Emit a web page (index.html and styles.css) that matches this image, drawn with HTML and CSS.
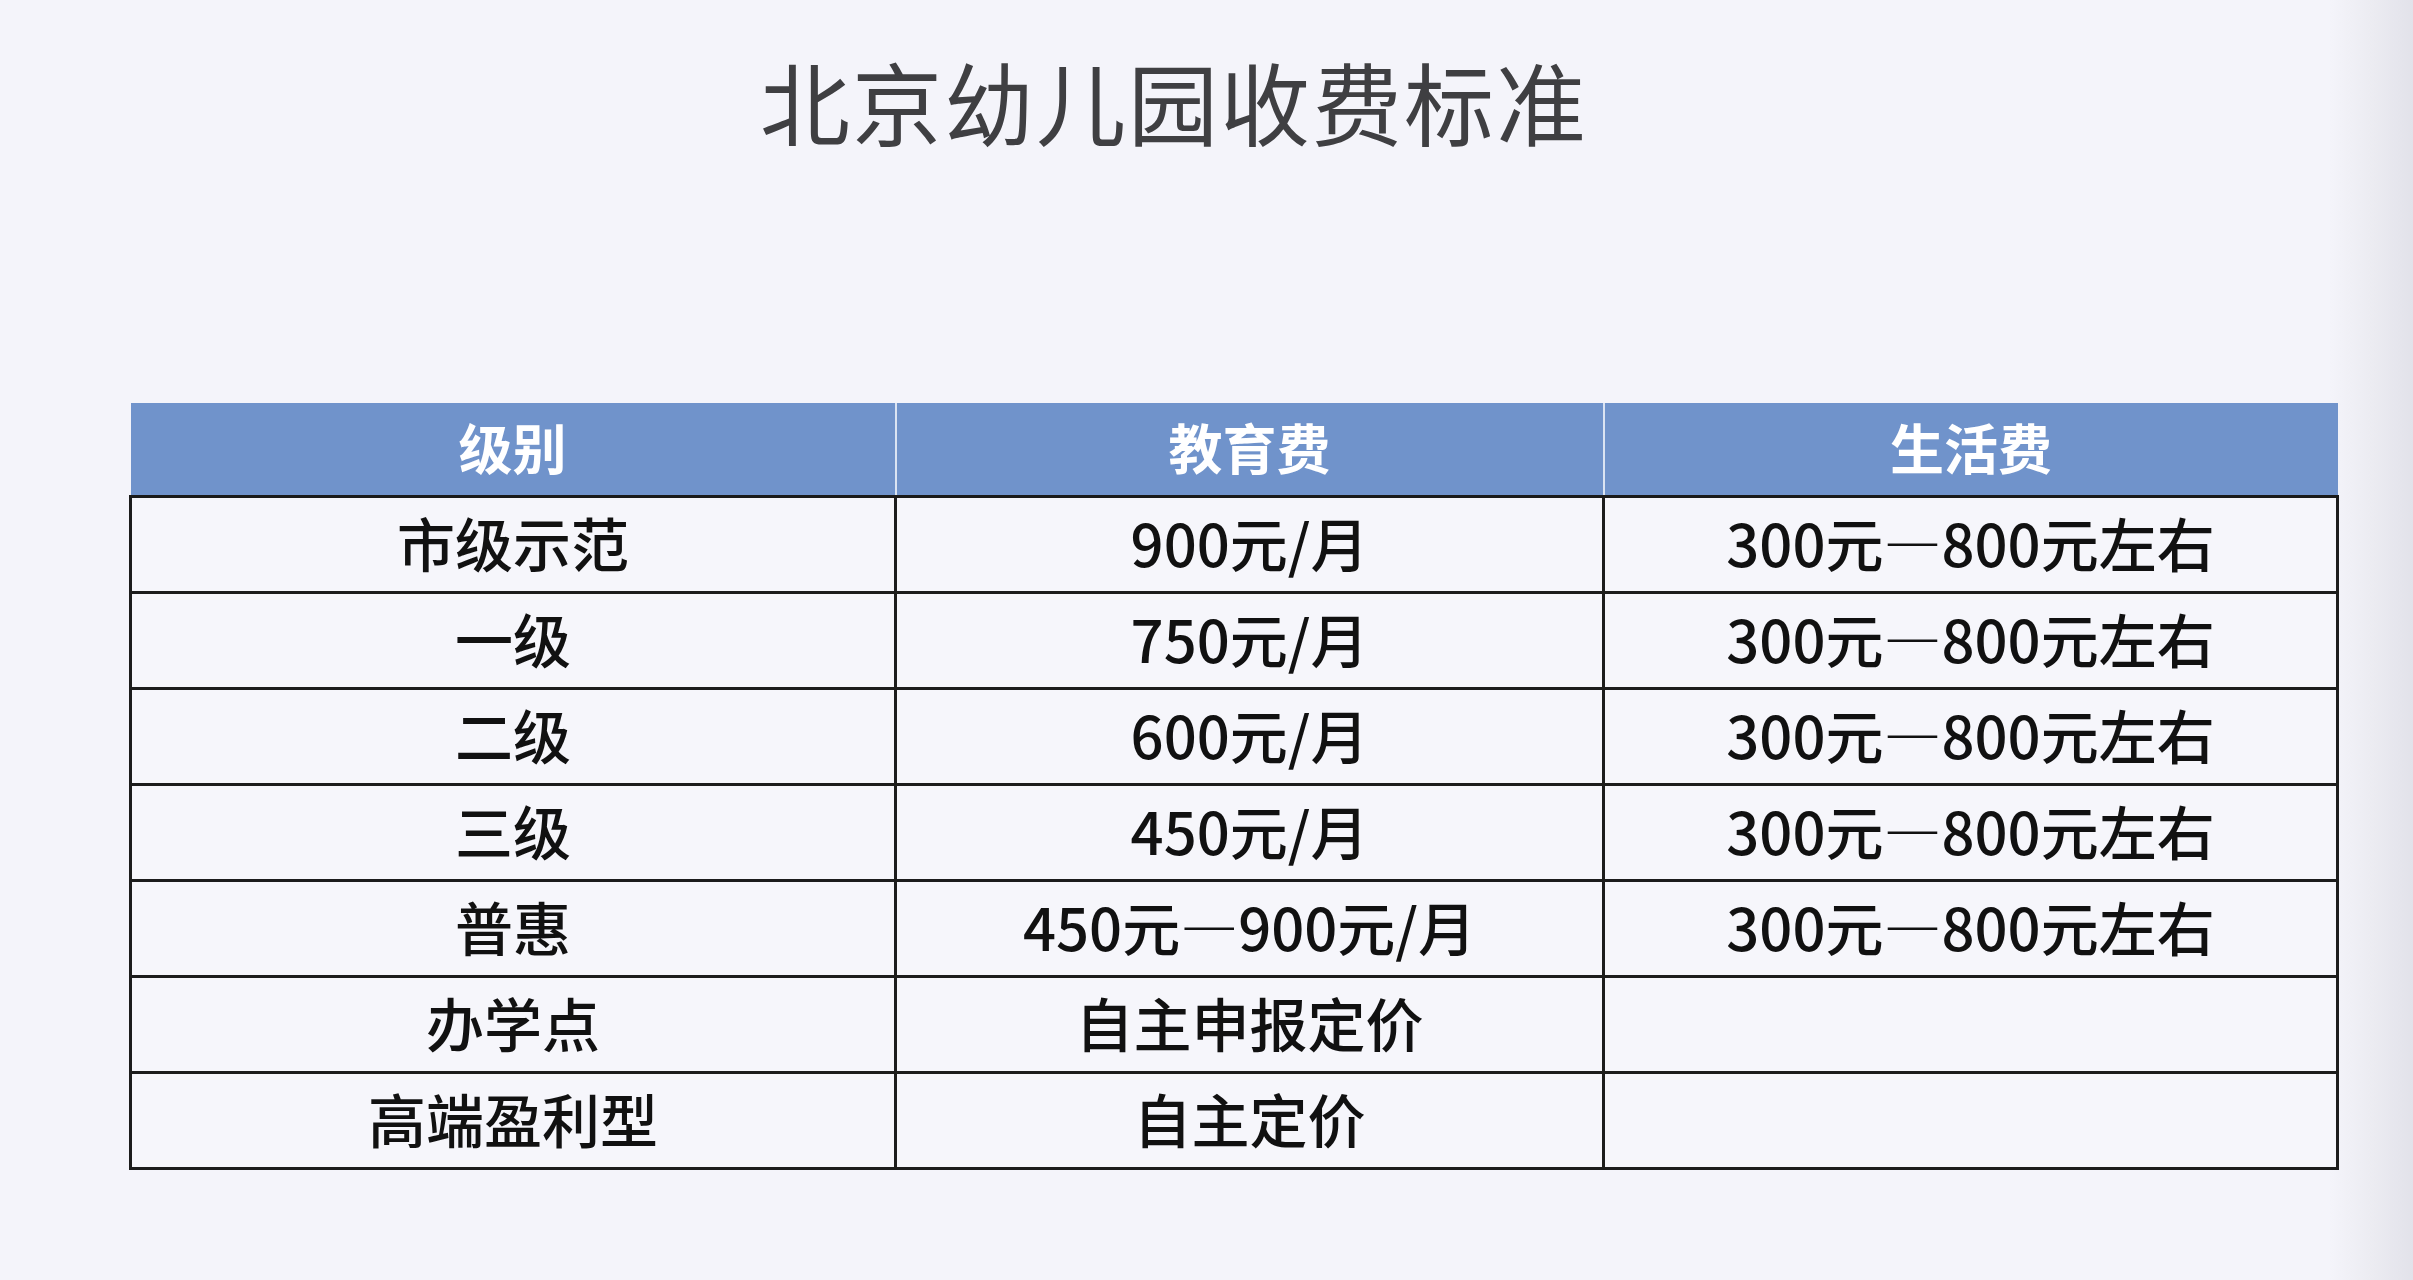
FILE: index.html
```html
<!DOCTYPE html>
<html lang="zh-CN">
<head>
<meta charset="utf-8">
<title>北京幼儿园收费标准</title>
<link rel="stylesheet" href="styles.css">
</head>
<body>
<main class="page">
  <h1 class="title">北京幼儿园收费标准</h1>
  <table class="fees">
    <colgroup>
      <col class="c1"><col class="c2"><col class="c3">
    </colgroup>
    <thead>
      <tr><th>级别</th><th>教育费</th><th>生活费</th></tr>
    </thead>
    <tbody>
      <tr><td>市级示范</td><td>900元/月</td><td>300元—800元左右</td></tr>
      <tr><td>一级</td><td>750元/月</td><td>300元—800元左右</td></tr>
      <tr><td>二级</td><td>600元/月</td><td>300元—800元左右</td></tr>
      <tr><td>三级</td><td>450元/月</td><td>300元—800元左右</td></tr>
      <tr><td>普惠</td><td>450元—900元/月</td><td>300元—800元左右</td></tr>
      <tr><td>办学点</td><td>自主申报定价</td><td></td></tr>
      <tr><td>高端盈利型</td><td>自主定价</td><td></td></tr>
    </tbody>
  </table>
</main>
</body>
</html>
```

FILE: styles.css
```css
html, body {
  margin: 0;
  padding: 0;
}
body {
  width: 2413px;
  height: 1280px;
  overflow: hidden;
  background: linear-gradient(to right, #f4f4fa 0, #f4f4fa 2330px, #ececf2 2370px, #e2e2ea 2413px);
  font-family: "Noto Sans CJK SC", "Noto Sans", sans-serif;
}
.page {
  padding: 40px 0 0 129px;
}
.title {
  margin: 0;
  width: 2090px;
  text-align: center;
  font-size: 90px;
  font-weight: 400;
  line-height: 120px;
  color: #3f3f42;
  letter-spacing: 2px;
}
.fees {
  margin-top: 243px;
  border-collapse: collapse;
  table-layout: fixed;
  width: 2207px;
}
.c1 { width: 765px; }
.c2 { width: 708px; }
.c3 { width: 734px; }
.fees th {
  height: 86px;
  padding: 0 0 6px;
  background: #7093cb;
  color: #ffffff;
  font-size: 54px;
  font-weight: 700;
  text-align: center;
  vertical-align: middle;
  border-left: 2px solid #dbe4f3;
  border-bottom: 3px solid #1a1a1a;
}
.fees th:first-child { border-left: none; }
.fees td {
  height: 87px;
  padding: 0 0 6px;
  border: 3px solid #1c1c1c;
  text-align: center;
  vertical-align: middle;
  font-size: 58px;
  font-weight: 500;
  color: #111111;
  background: #f6f6fb;
}
```
